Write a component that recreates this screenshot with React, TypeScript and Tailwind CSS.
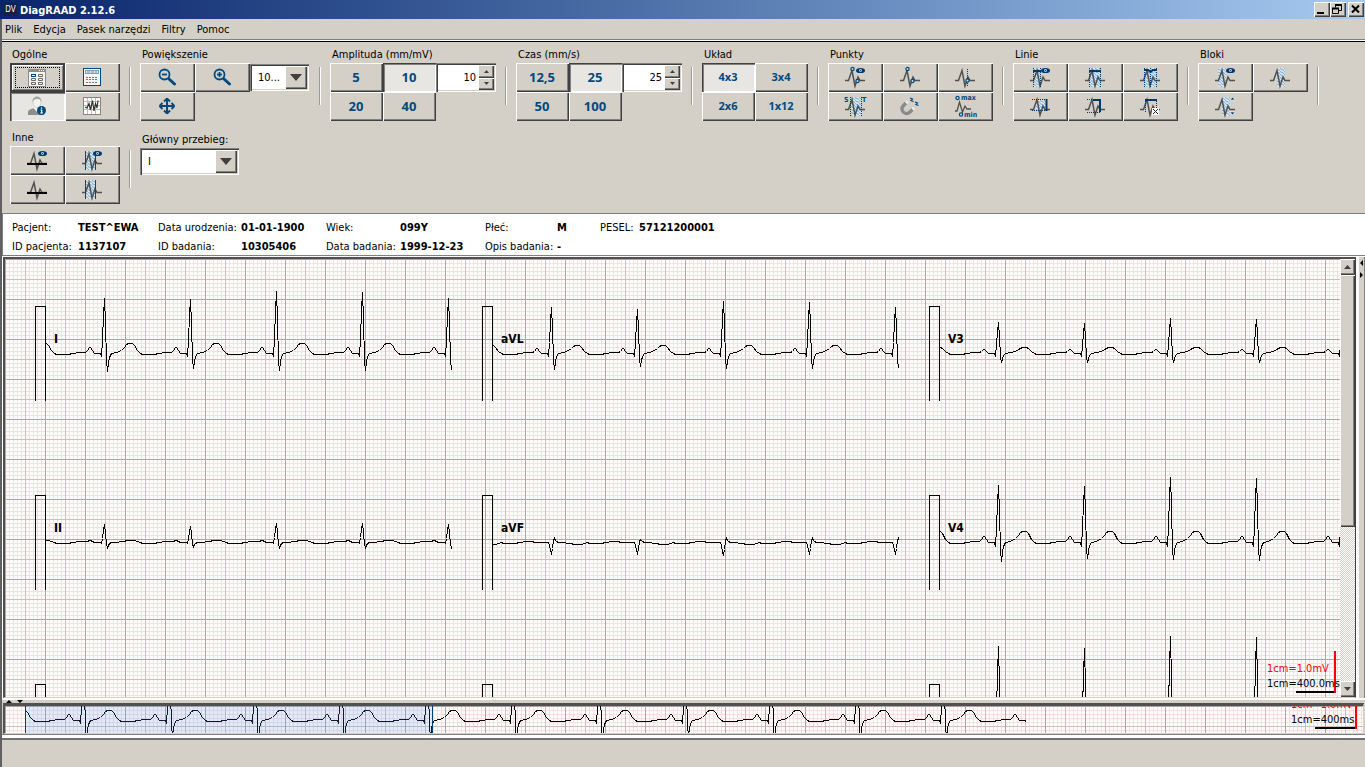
import React, { ReactNode } from "react";

const RAISED =
  "bg-[#d4d0c8] shadow-[inset_1px_1px_#fff,inset_-1px_-1px_#404040,inset_-2px_-2px_#808080]";
const PRESSED =
  "bg-[#e8e6e2] shadow-[inset_1px_1px_#404040,inset_2px_2px_#808080,inset_-1px_-1px_#fff]";
const SUNKEN =
  "bg-white shadow-[inset_1px_1px_#808080,inset_2px_2px_#404040,inset_-1px_-1px_#fff,inset_-2px_-2px_#d4d0c8]";

/* ---------- icons ---------- */

const NAVY = "#003a6c";
const BLUE = "#004a80";

function Icon({ children }: { children: ReactNode }) {
  return (
    <svg width="24" height="24" viewBox="0 0 24 24" fill="none" aria-hidden="true">
      {children}
    </svg>
  );
}

const Wave = () => (
  <path d="M2 15.500H5.500L9 5.500L12 21L15 12L17 15.500H22" stroke="#505050" strokeWidth="1.500" />
);
const Eye = ({ x = 17.5 }: { x?: number }) => (
  <g>
    <ellipse cx={x} cy="5.500" rx="4.500" ry="2.600" fill={NAVY} />
    <circle cx={x} cy="5.500" r="1.400" fill="#d4e2ee" />
    <circle cx={x} cy="5.500" r="0.700" fill={NAVY} />
  </g>
);
const Dot = ({ x, y }: { x: number; y: number }) => (
  <circle cx={x} cy={y} r="1.600" fill="#d4e2ee" stroke={BLUE} strokeWidth="1.300" />
);
const Hatch = ({ x, w, y = 3, h = 19 }: { x: number; w: number; y?: number; h?: number }) => (
  <rect x={x} y={y} width={w} height={h} fill="url(#hatch)" />
);
const Dots = ({ d }: { d: string }) => (
  <path d={d} stroke={NAVY} strokeWidth="1" strokeDasharray="1 1" shapeRendering="crispEdges" />
);
const Bar = ({ d }: { d: string }) => <path d={d} stroke={NAVY} strokeWidth="2" />;

const LayoutIcon = () => (
  <Icon>
    <rect x="3" y="3" width="18" height="18" fill="#8c8c8c" />
    <rect x="4" y="6" width="16" height="14" fill="#f4f4f2" />
    <path d="M14 4.500h1M16 4.500h1M18 4.500h1" stroke="#fff" />
    <rect x="6.500" y="8.500" width="4" height="2" stroke={BLUE} />
    <path d="M13.500 8.500h4v2h-4zM6.500 12.500h4v2h-4zM13.500 12.500h4v2h-4zM6.500 16.500h4v2h-4zM13.500 16.500h4v2h-4z" stroke="#6a6a6a" />
  </Icon>
);
const ReportIcon = () => (
  <Icon>
    <rect x="3.500" y="3.500" width="17" height="17" fill="#f7f7f5" stroke={BLUE} />
    <rect x="5.500" y="5.500" width="13" height="3" fill="#dfe8f0" stroke="#7da0bd" />
    <path d="M7 7h10" stroke="#8a8a8a" strokeDasharray="3 1" />
    <path d="M6 12.500h12M6 14.500h12M6 17.500h12" stroke="#777" strokeDasharray="2 1" />
  </Icon>
);
const PersonIcon = () => (
  <Icon>
    <path d="M3 21v-3c0-2.500 4-3 6-4v-2h6v2c2 1 4 1.500 4 4v3z" fill="#8d8d8b" />
    <path d="M8.500 14L12 18l3-4v-3H9z" fill="#f5f5f3" />
    <path d="M8 8c0-7 8-7 8 0c0 3-2 6-4 6s-4-3-4-6z" fill="#f2f2f0" stroke="#b5b5b2" strokeWidth=".6" />
    <path d="M7.500 8c-.5-7 9.500-7 9 0c-1-3-3-3-4-3s-4 0-5 3z" fill="#a3a3a0" />
    <circle cx="16.500" cy="16.500" r="4.500" fill={BLUE} />
    <path d="M16.500 13.400v1.400M15.500 16h1.200v3M15.300 19h2.600" stroke="#fff" strokeWidth="1.200" />
  </Icon>
);
const EcgIcon = () => (
  <Icon>
    <rect x="3.500" y="3.500" width="17" height="17" fill="#fff" stroke="#8d8080" />
    <path d="M7.500 4v16M11.500 4v16M15.500 4v16M4 7.500h16M4 11.500h16M4 15.500h16" stroke="#f2a8a8" />
    <path d="M5 13L7 14L9 9.500L10.500 16L12.500 6.500L14 17L15.500 9.500L17 14L18 6.500" stroke="#333" strokeWidth="1.200" />
  </Icon>
);
const Magnifier = ({ plus }: { plus?: boolean }) => (
  <Icon>
    <circle cx="9.500" cy="9.500" r="5" stroke={BLUE} strokeWidth="1.800" />
    <path d="M7 9.500h5" stroke={BLUE} strokeWidth="1.800" />
    {plus && <path d="M9.500 7v5" stroke={BLUE} strokeWidth="1.800" />}
    <path d="M14 14L19.500 19" stroke={BLUE} strokeWidth="3" strokeLinecap="round" />
  </Icon>
);
const MoveIcon = () => (
  <Icon>
    <path d="M12 5v14M5 12h14" stroke={BLUE} strokeWidth="2" />
    <path d="M12 4.500l-3 3M12 4.500l3 3M12 19.500l-3-3M12 19.500l3-3M4.500 12l3-3M4.500 12l3 3M19.500 12l-3-3M19.500 12l-3 3" stroke={BLUE} strokeWidth="1.800" />
  </Icon>
);
const PointsEye = () => <Icon><Wave /><Dot x={9.5} y={4} /><Dot x={14.5} y={16} /><Eye /></Icon>;
const Points = () => <Icon><Wave /><Dot x={9.5} y={4} /><Dot x={14.5} y={16} /></Icon>;
const PointLine = () => <Icon><Wave /><Dots d="M14.500 4V22" /><Dot x={14.5} y={15.5} /></Icon>;
const StIcon = () => (
  <Icon>
    <Hatch x={8} w={11} />
    <Wave />
    <Dots d="M7.500 3V22M18.500 3V22" />
    <text x="1" y="8" fontSize="7" fontWeight="700" fill={BLUE}>S</text>
    <text x="19" y="8" fontSize="7" fontWeight="700" fill={BLUE}>T</text>
  </Icon>
);
const MagnetIcon = () => (
  <Icon>
    <path d="M8.500 8.500L5.500 11.500C1 16 7.500 22.500 12 18L15 15" stroke="#8a8a8a" strokeWidth="3.400" />
    <path d="M8 9l1.600-1.500M14.500 15.500l1.600-1.500" stroke="#eeeeec" strokeWidth="3.400" />
    <path d="M12 4l2.500 1-1.500 1.500 2.500 1M17 8l2.500 1-1.500 1.500 2.500 1" stroke={BLUE} strokeWidth="1.200" />
  </Icon>
);
const MinMaxIcon = () => (
  <Icon>
    <path d="M2 17H4L6.500 8L9.500 18L12 12L14 15H18" stroke="#505050" strokeWidth="1.300" />
    <Dot x={4.5} y={4} />
    <Dot x={8} y={20.5} />
    <text x="8" y="6" fontSize="7" fontWeight="700" fill={BLUE}>max</text>
    <text x="11" y="23" fontSize="7" fontWeight="700" fill={BLUE}>min</text>
  </Icon>
);
const Line1 = () => <Icon><Hatch x={5} w={8} /><Wave /><Dots d="M5.500 3V22M12.500 3V22" /><Bar d="M5 6H13" /><Eye /></Icon>;
const Line2 = () => <Icon><Hatch x={6} w={12} /><Wave /><Dots d="M6.500 3V22M17.500 3V22" /><Bar d="M6 6H18" /></Icon>;
const Line3 = () => <Icon><Hatch x={6} w={13} /><Wave /><Dots d="M6.500 3V22M12.500 3V22M18.500 3V22" /><Bar d="M6 5H10L12.500 7L15 5H19" /></Icon>;
const Line4 = () => <Icon><Hatch x={8} w={10} y={5} h={12} /><Wave /><Dots d="M4 5.500H18M4 16.500H18" /><Bar d="M18.500 5V17" /></Icon>;
const Line5 = () => <Icon><Wave /><Dots d="M4 5.500H10M4 18.500H17" /><Bar d="M10 6H17V18" /></Icon>;
const Line6 = () => (
  <Icon>
    <Wave />
    <Dots d="M7.500 7V19M18.500 7V14" />
    <Bar d="M7 6H19" />
    <rect x="14" y="14" width="7" height="7" fill="#fff" />
    <path d="M15 15l5 5M20 15l-5 5" stroke="#222" />
  </Icon>
);
const Block1 = () => <Icon><Hatch x={5} w={8} /><Wave /><Eye /></Icon>;
const Block2 = () => <Icon><Hatch x={9} w={8} /><Wave /></Icon>;
const Block3 = () => (
  <Icon>
    <Hatch x={9} w={8} />
    <Wave />
    <path d="M17 6h5l-2.500-3z M17 18h5l-2.500 3z" fill={NAVY} stroke="#fff" strokeWidth=".6" />
  </Icon>
);
const IsoEye = () => <Icon><Wave /><path d="M2 16H22" stroke="#000" strokeWidth="2" /><Eye /></Icon>;
const Iso = () => <Icon><Wave /><path d="M2 16H22" stroke="#000" strokeWidth="2" /></Icon>;
const Span = () => (
  <Icon><Hatch x={6} w={9} /><Wave /><path d="M5.500 3V22M15.500 3V22" stroke={BLUE} /></Icon>
);
const SpanEye = () => (
  <Icon><Hatch x={6} w={9} /><Wave /><path d="M5.500 3V22M15.500 3V22" stroke={BLUE} /><Eye /></Icon>
);

/* ---------- controls ---------- */

type ToolProps = { label: string; children: ReactNode; pressed?: boolean; focused?: boolean };

function Tool({ label, children, pressed, focused }: ToolProps) {
  return (
    <button
      type="button"
      aria-label={label}
      aria-pressed={pressed}
      className={`flex h-[29px] w-[55px] items-center justify-center ${pressed ? `pb-px pr-px ${PRESSED}` : focused ? "border-2 border-[#404040] bg-[#d4d0c8] shadow-[inset_1px_1px_#fff,inset_-1px_-1px_#808080]" : `pb-px pr-px ${RAISED}`}`}
    >
      {focused ? (
        <span className="flex h-[21px] w-[45px] items-center justify-center pr-px outline-1 -outline-offset-1 outline-dotted outline-black">
          {children}
        </span>
      ) : (
        children
      )}
    </button>
  );
}

function NumButton({ text, pressed, small }: { text: string; pressed?: boolean; small?: boolean }) {
  return (
    <button
      type="button"
      aria-pressed={!!pressed}
      className={`flex h-[29px] w-[53px] items-center justify-center pb-px pr-px font-['Open_Sans',sans-serif] font-bold text-[#004a80] ${small ? "text-[11px]" : "text-[13px]"} ${pressed ? PRESSED : RAISED}`}
    >
      {text}
    </button>
  );
}

function Group({ title, children }: { title: string; children: ReactNode }) {
  return (
    <section className="flex">
      <div>
        <h2 className="h-[15px] pl-[2px] leading-[13px]">{title}</h2>
        {children}
      </div>
      <div className="mx-[9px] mt-[19px] h-[38px] w-[2px] border-l border-r border-l-[#9a9a96] border-r-white" />
    </section>
  );
}

function Spinner({ label, value }: { label: string; value: string }) {
  return (
    <div className={`flex h-[29px] w-[60px] p-[2px] ${SUNKEN}`}>
      <input aria-label={label} defaultValue={value} className="w-0 min-w-0 flex-1 bg-transparent pr-[2px] text-right outline-none" />
      <div className="flex w-[16px] flex-col">
        <button type="button" aria-label={`${label} +`} className={`flex flex-1 items-center justify-center ${RAISED}`}>
          <svg width="5" height="3" aria-hidden="true"><path d="M0 3L2.500 0L5 3z" fill="#404040" /></svg>
        </button>
        <button type="button" aria-label={`${label} -`} className={`flex flex-1 items-center justify-center ${RAISED}`}>
          <svg width="5" height="3" aria-hidden="true"><path d="M0 0L2.500 3L5 0z" fill="#404040" /></svg>
        </button>
      </div>
    </div>
  );
}

function Combo({ id, label, value, width }: { id: string; label: string; value: string; width: string }) {
  return (
    <div className={`flex h-[27px] p-[2px] ${width} ${SUNKEN}`}>
      <select id={id} aria-label={label} className="w-0 min-w-0 flex-1 appearance-none bg-transparent pl-[6px] outline-none">
        <option>{value}</option>
      </select>
      <span className={`pointer-events-none flex w-[22px] items-center justify-center ${RAISED}`}>
        <svg width="12" height="7" aria-hidden="true"><path d="M0 0H12L6 7z" fill="#404040" /></svg>
      </span>
    </div>
  );
}

/* ---------- traces ---------- */

type Lead = { p: number; q: number; r: number[]; s: number[]; t: number };

const PERIOD = 86;

const LEADS: Record<string, Lead> = {
  I: { p: 6, q: 3, r: [55, 55, 54, 62, 61, 55], s: [18, 18, 15, 17, 17, 16], t: 10 },
  II: { p: 2, q: 1, r: [18, 18, 16, 19, 19, 18], s: [5, 5, 4, 5, 5, 5], t: 2 },
  aVL: { p: 5, q: 3, r: [46, 46, 44, 52, 51, 46], s: [16, 16, 13, 15, 15, 14], t: 8 },
  aVF: { p: 0, q: 0, r: [-11, -11, -11, -13, -11, -11], s: [-4, -4, -3, -4, -4, -4], t: -2 },
  V3: { p: 4, q: 2, r: [31, 31, 30, 35, 34, 31], s: [9, 9, 9, 9, 9, 9], t: 6 },
  V4: { p: 6, q: 4, r: [57, 57, 56, 65, 64, 57], s: [19, 19, 16, 17, 18, 17], t: 11 },
  V5: { p: 7, q: 4, r: [85, 85, 83, 95, 94, 85], s: [20], t: 12 },
};

function tracePath(lead: Lead, firstR: number, base: number, beats: number): string {
  const pts: string[] = [];
  for (let i = 0; i < beats; i++) {
    const x = firstR + i * PERIOD;
    const r = lead.r[i % lead.r.length];
    const s = lead.s[i % lead.s.length];
    const shape: [number, number][] = [
      [-25, 0.6], [-19, 0.6], [-17, 0.5 * lead.p], [-15, lead.p], [-14, lead.p], [-12, 0.5 * lead.p],
      [-10, 0], [-8, 0], [-4, 0], [-3, -lead.q], [-2, 0.25 * r], [-1, 0.7 * r], [0, r],
      [1, 0.55 * r], [2, -0.4 * s], [3, -s], [4, -0.55 * s], [5, -0.2 * s], [7, 0], [12, 0.1 * lead.t],
      [17, 0.35 * lead.t], [20, 0.6 * lead.t], [22, 0.9 * lead.t], [24, lead.t], [28, lead.t],
      [30, 0.8 * lead.t], [33, 0.3 * lead.t], [36, 0], [38, -0.7], [50, -0.7], [54, 0],
    ];
    for (const [dx, dy] of shape) pts.push(`${x + dx + 0.5} ${Math.round(base - dy) + 0.5}`);
  }
  return "M" + pts.join("L");
}

type TraceProps = { name?: string; lead?: string; x: number; y: number; width: number };

function LeadTrace({ name, lead, x, y, width }: TraceProps) {
  return (
    <g>
      <path d={`M${x + 0.5} ${y + 95}V${y + 0.5}H${x + 10.5}V${y + 95}`} stroke="#000" fill="none" shapeRendering="crispEdges" />
      {lead && (
        <svg x={x + 11} y={y - 60} width={width} height="200">
          <path d={tracePath(LEADS[lead], -28, 107, 7)} stroke="#000" fill="none" shapeRendering="crispEdges" />
        </svg>
      )}
      {name && <text x={x + 19} y={y + 37} fontSize="12" fontWeight="700">{name}</text>}
    </g>
  );
}

const TRACES: TraceProps[] = [
  { name: "I", lead: "I", x: 30, y: 47, width: 406 },
  { name: "aVL", lead: "aVL", x: 477, y: 47, width: 406 },
  { name: "V3", lead: "V3", x: 924, y: 47, width: 406 },
  { name: "II", lead: "II", x: 30, y: 236, width: 406 },
  { name: "aVF", lead: "aVF", x: 477, y: 236, width: 406 },
  { name: "V4", lead: "V4", x: 924, y: 236, width: 406 },
  { x: 30, y: 425, width: 406 },
  { x: 477, y: 425, width: 406 },
  { lead: "V5", x: 924, y: 425, width: 406 },
];

const MINOR = [4, 8, 12, 16, 24, 28, 32, 36];

function SharedDefs() {
  return (
    <svg width="0" height="0" className="absolute" aria-hidden="true">
      <defs>
        <pattern id="hatch" width="4" height="3" patternUnits="userSpaceOnUse">
          <rect width="4" height="3" fill="#dce8f0" />
          <path d="M-1 0L5 3M-1 -3L5 0M-1 3L5 6" stroke="#74a3c8" strokeWidth="1" />
        </pattern>
        <pattern id="paper" width="40" height="40" patternUnits="userSpaceOnUse">
          <rect width="40" height="40" fill="#fff" />
          {MINOR.map((n) => (
            <path key={n} d={`M${n + 0.5} 0V40M0 ${n + 0.5}H40`} stroke="#fcdede" />
          ))}
          <path d="M20.500 0V40M0 20.500H40" stroke="#d2bebe" />
          <path d="M.5 0V40M0 .5H40" stroke="#b0a4a4" />
        </pattern>
      </defs>
    </svg>
  );
}

const INFO: [string, string][][] = [
  [["Pacjent:", "TEST^EWA"], ["Data urodzenia:", "01-01-1900"], ["Wiek:", "099Y"], ["Płeć:", "M"], ["PESEL:", "57121200001"]],
  [["ID pacjenta:", "1137107"], ["ID badania:", "10305406"], ["Data badania:", "1999-12-23"], ["Opis badania:", "-"]],
];

const INFO_ROW =
  "grid h-[18px] grid-cols-[66px_80px_83px_85px_74px_85px_72px_43px_39px_1fr] items-end whitespace-nowrap leading-[16px]";

export default function App() {
  return (
    <div className="flex h-screen min-h-[560px] flex-col overflow-hidden bg-[#d4d0c8] font-['DejaVu_Sans_Condensed','DejaVu_Sans',sans-serif] text-[11px] leading-[14px] text-black">
      <SharedDefs />

      <header className="flex h-[19px] shrink-0 items-center bg-linear-to-r from-[#0a246a] to-[#a6caf0] pl-[4px] pr-px">
        <span className="flex h-[13px] w-[13px] items-center justify-center bg-[#14204a] text-[8px] leading-none text-white">DV</span>
        <h1 className="ml-[3px] flex-1 pt-[2px] font-bold text-white">DiagRAAD 2.12.6</h1>
        <button type="button" aria-label="Minimalizuj" className={`h-[15px] w-[16px] ${RAISED}`}>
          <svg width="16" height="15" aria-hidden="true"><path d="M3 11H10" stroke="#000" strokeWidth="2" /></svg>
        </button>
        <button type="button" aria-label="Przywróć" className={`h-[15px] w-[16px] ${RAISED}`}>
          <svg width="16" height="15" fill="none" stroke="#000" aria-hidden="true">
            <path d="M5 3H11M2 6.500H9" strokeWidth="2" />
            <path d="M5.500 3V5.500M11.500 2V8.500H9M2.500 6V11.500H8.500V6" />
          </svg>
        </button>
        <button type="button" aria-label="Zamknij" className={`ml-[2px] h-[15px] w-[16px] ${RAISED}`}>
          <svg width="16" height="15" aria-hidden="true"><path d="M4 3.500L11 10.500M11 3.500L4 10.500" stroke="#000" strokeWidth="2" /></svg>
        </button>
      </header>

      <div className="flex min-h-0 flex-1 flex-col border-l-2 border-[#606060]">
        <nav className="flex h-[20px] shrink-0 items-center gap-[11px] pl-[3px] pt-[2px]">
          {["Plik", "Edycja", "Pasek narzędzi", "Filtry", "Pomoc"].map((m) => (
            <button key={m} type="button">{m}</button>
          ))}
        </nav>
        <div className="h-[3px] shrink-0 border-y border-b-black border-t-[#808080] bg-white" />

        <div className="flex shrink-0 flex-wrap gap-y-[10px] pb-[9px] pl-[8px] pt-[6px]">
          <Group title="Ogólne">
            <div className="grid w-[110px] grid-cols-2">
              <Tool label="Układ okna" focused><LayoutIcon /></Tool>
              <Tool label="Raport"><ReportIcon /></Tool>
              <Tool label="Dane pacjenta" pressed><PersonIcon /></Tool>
              <Tool label="Zapis EKG"><EcgIcon /></Tool>
            </div>
          </Group>
          <Group title="Powiększenie">
            <div className="flex">
              <Tool label="Pomniejsz"><Magnifier /></Tool>
              <Tool label="Powiększ"><Magnifier plus /></Tool>
              <div className="w-[60px] pt-px"><Combo id="zoom" label="Powiększenie" value="10..." width="w-[59px]" /></div>
            </div>
            <Tool label="Przesuń"><MoveIcon /></Tool>
          </Group>
          <Group title="Amplituda (mm/mV)">
            <div className="flex">
              <div className="grid w-[106px] grid-cols-2">
                <NumButton text="5" />
                <NumButton text="10" pressed />
                <NumButton text="20" />
                <NumButton text="40" />
              </div>
              <Spinner label="Amplituda" value="10" />
            </div>
          </Group>
          <Group title="Czas (mm/s)">
            <div className="flex">
              <div className="grid w-[106px] grid-cols-2">
                <NumButton text="12,5" />
                <NumButton text="25" pressed />
                <NumButton text="50" />
                <NumButton text="100" />
              </div>
              <Spinner label="Czas" value="25" />
            </div>
          </Group>
          <Group title="Układ">
            <div className="grid w-[106px] grid-cols-2">
              <NumButton text="4x3" small pressed />
              <NumButton text="3x4" small />
              <NumButton text="2x6" small />
              <NumButton text="1x12" small />
            </div>
          </Group>
          <Group title="Punkty">
            <div className="grid w-[165px] grid-cols-3">
              <Tool label="Pokaż punkty"><PointsEye /></Tool>
              <Tool label="Dodaj punkty"><Points /></Tool>
              <Tool label="Punkt na linii"><PointLine /></Tool>
              <Tool label="Odcinek ST"><StIcon /></Tool>
              <Tool label="Przyciąganie"><MagnetIcon /></Tool>
              <Tool label="Minimum i maksimum"><MinMaxIcon /></Tool>
            </div>
          </Group>
          <Group title="Linie">
            <div className="grid w-[165px] grid-cols-3">
              <Tool label="Pokaż linie"><Line1 /></Tool>
              <Tool label="Linia pozioma"><Line2 /></Tool>
              <Tool label="Linie wielokrotne"><Line3 /></Tool>
              <Tool label="Linia pionowa"><Line4 /></Tool>
              <Tool label="Linia łamana"><Line5 /></Tool>
              <Tool label="Usuń linię"><Line6 /></Tool>
            </div>
          </Group>
          <Group title="Bloki">
            <div className="grid w-[110px] grid-cols-2">
              <Tool label="Pokaż bloki"><Block1 /></Tool>
              <Tool label="Dodaj blok"><Block2 /></Tool>
              <Tool label="Rozciągnij blok"><Block3 /></Tool>
            </div>
          </Group>
          <Group title="Inne">
            <div className="grid w-[110px] grid-cols-2">
              <Tool label="Pokaż izolinię"><IsoEye /></Tool>
              <Tool label="Pokaż zakres"><SpanEye /></Tool>
              <Tool label="Izolinia"><Iso /></Tool>
              <Tool label="Zakres"><Span /></Tool>
            </div>
          </Group>
          <div className="pt-[2px]">
            <label htmlFor="lead" className="block h-[15px] pl-[2px] leading-[13px]">Główny przebieg:</label>
            <Combo id="lead" label="Główny przebieg:" value="I" width="w-[99px]" />
          </div>
        </div>

        <section className="flex shrink-0 flex-col gap-px border-y border-l border-[#808080] bg-white pl-[9px] pt-[4px]">
          {INFO.map((row, i) => (
            <div key={i} className={INFO_ROW}>
              {row.map(([k, v]) => (
                <React.Fragment key={k}>
                  <span>{k}</span>
                  <span className="font-bold">{v}</span>
                </React.Fragment>
              ))}
            </div>
          ))}
        </section>

        <main className="flex min-h-0 flex-1 bg-white pl-px pt-px">
          <div className="flex min-w-0 flex-1 border-b border-l-2 border-r border-t-2 border-b-[#d4d0c8] border-l-[#505050] border-r-[#404040] border-t-[#505050]">
            <div className="relative min-w-0 flex-1 overflow-hidden">
              <svg className="block h-full w-full" aria-label="Zapis EKG">
                <rect width="100%" height="100%" fill="url(#paper)" />
                {TRACES.map((t) => (
                  <LeadTrace key={`${t.x}-${t.y}`} {...t} />
                ))}
              </svg>
              <div className="absolute bottom-[4px] right-[4px] h-[42px] w-[69px] border-r-2 border-[#f00]">
                <p className="mt-[10px] leading-[15px] whitespace-nowrap text-[#f00]">1cm=1.0mV</p>
                <p className="leading-[15px] whitespace-nowrap">1cm=400.0ms</p>
                <div className="ml-auto h-[2px] w-[38px] bg-black" />
              </div>
            </div>
            <div className="flex w-[15px] flex-col bg-[repeating-conic-gradient(#fff_0_25%,#d4d0c8_0_50%)] bg-[length:2px_2px]">
              <button type="button" aria-label="W górę" className={`flex h-[16px] items-center justify-center ${RAISED}`}>
                <svg width="7" height="4" aria-hidden="true"><path d="M0 4L3.500 0L7 4z" fill="#404040" /></svg>
              </button>
              <div className="flex-1">
                <div className={`h-[62%] ${RAISED}`} />
              </div>
              <button type="button" aria-label="W dół" className={`flex h-[16px] items-center justify-center ${RAISED}`}>
                <svg width="7" height="4" aria-hidden="true"><path d="M0 0L3.500 4L7 0z" fill="#404040" /></svg>
              </button>
            </div>
          </div>
          <div className="ml-[3px] flex w-[6px] flex-col gap-[6px] border-r border-[#808080] bg-[#d4d0c8] pt-[3px]">
            <svg width="5" height="6" aria-hidden="true"><path d="M4 0V6L1 3z" /></svg>
            <svg width="5" height="6" aria-hidden="true"><path d="M1 0V6L4 3z" /></svg>
          </div>
        </main>

        <div className="h-[5px] shrink-0 border-t-2 border-white bg-[#d4d0c8] pl-[4px]">
          <svg width="20" height="3" className="block" aria-hidden="true"><path d="M0 3L3 0L6 3zM11 0H17L14 3z" /></svg>
        </div>

        <section className="ml-px mr-px shrink-0 border-b border-l-2 border-r border-t-3 border-b-[#d4d0c8] border-l-[#505050] border-r-[#d4d0c8] border-t-[#505050]">
          <div className="relative h-[27px] overflow-hidden">
            <svg className="block h-full w-full" aria-label="Podgląd zapisu">
              <rect width="100%" height="100%" fill="url(#paper)" />
              <svg x="20" y="0" width="1001" height="27">
                <path d={tracePath(LEADS.I, -28, 14, 14)} stroke="#000" fill="none" shapeRendering="crispEdges" />
              </svg>
              <rect x="20" width="408" height="27" fill="#4a98f0" fillOpacity=".18" />
              <path d="M20.500 0V27M427.500 0V27" stroke="#00407a" />
            </svg>
            <div className="absolute bottom-[4px] right-[6px] h-[42px] w-[66px] border-r-2 border-[#f00]">
              <p className="mt-[10px] leading-[15px] whitespace-nowrap text-[#f00]">1cm=1.0mV</p>
              <p className="leading-[15px] whitespace-nowrap">1cm=400ms</p>
              <div className="ml-auto h-[2px] w-[40px] bg-black" />
            </div>
          </div>
        </section>
        <div className="h-[6px] shrink-0 border-b-2 border-t border-b-[#707070] border-t-[#808080] bg-white" />
        <footer className="h-[27px] shrink-0" />
      </div>
    </div>
  );
}
